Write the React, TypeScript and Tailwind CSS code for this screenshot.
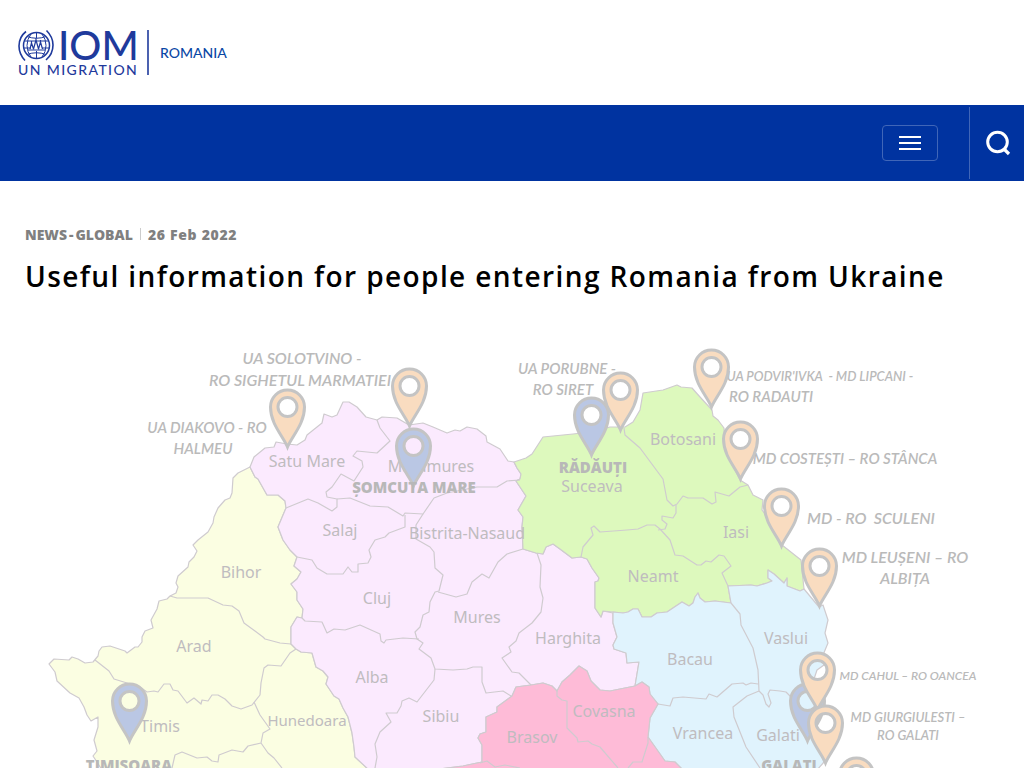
import React from "react";

type Label = { text: string; x: number; y: number };

const outline = "#cfcbcf";

const zones = [
  {
    name: "west",
    fill: "#fbfee2",
    d: "M250 467L238 473L233 478L232 493L230 498L225 500L218 508L214 517L213 523L208 532L198 540L193 545L197 551L194 557L189 562L188 567L178 576L176 583L178 587L176 593L170 596L167 599L159 601L157 609L151 620L153 628L145 631L142 637L142 642L138 647L135 647L127 653L125 651L110 646L102 647L99 651L98 656L93 662L85 663L78 659L72 657L69 660L54 659L49 664L55 672L57 681L70 693L79 698L84 707L87 715L91 721L98 717L98 727L94 740L97 751L93 756L97 762L102 770L369 770L355 757L354 747L352 733L348 717L343 708L339 699L334 696L326 684L328 677L323 671L316 667L312 653L301 652L296 649L291 644L291 627L297 617L302 618L303 609L297 600L297 592L291 584L297 579L301 572L294 566L297 557L290 550L283 540L278 527L286 508L285 501L278 495L267 495L258 479L255 477Z",
  },
  {
    name: "centre",
    fill: "#fbeafe",
    d: "M250 467L254 457L265 448L274 447L276 442L287 444L297 445L305 440L307 435L322 423L324 414L332 417L337 415L343 402L349 402L357 407L366 417L377 420L382 417L397 418L409 425L423 423L433 427L447 433L455 430L460 431L467 427L477 429L486 436L487 442L500 449L508 461L514 462L517 468L521 474L520 479L516 481L526 496L522 503L518 510L523 517L522 527L523 549L536 553L543 554L546 547L553 544L560 549L572 558L581 557L587 559L592 568L599 578L598 581L595 582L595 608L601 617L603 611L613 613L613 623L617 637L613 645L614 649L626 653L627 663L639 662L635 686L610 691L600 690L591 681L587 671L579 666L570 675L562 682L557 691L552 686L543 683L531 685L516 687L512 696L497 707L497 712L486 717L486 732L480 734L478 738L482 745L482 762L463 766L432 770L369 770L355 757L354 747L352 733L348 717L343 708L339 699L334 696L326 684L328 677L323 671L316 667L312 653L301 652L296 649L291 644L291 627L297 617L302 618L303 609L297 600L297 592L291 584L297 579L301 572L294 566L297 557L290 550L283 540L278 527L286 508L285 501L278 495L267 495L258 479L255 477Z",
  },
  {
    name: "north-east",
    fill: "#ddf9bd",
    d: "M514 462L526 458L532 454L543 437L573 434L591 432L610 427L625 427L633 422L640 410L643 393L663 390L677 385L681 387L692 388L700 397L712 410L713 416L718 420L724 428L725 450L740 480L748 485L753 495L763 500L762 510L767 517L782 545L801 560L804 589L800 591L787 586L787 578L784 583L774 574L768 570L768 578L772 581L767 583L757 586L751 585L728 586L731 603L715 601L705 602L700 598L698 593L695 597L693 603L689 606L682 602L667 612L657 613L651 617L642 617L638 609L633 609L628 612L623 613L613 612L603 611L601 617L595 608L595 582L598 581L599 578L592 568L587 559L581 557L572 558L560 549L553 544L546 547L543 554L536 553L523 549L522 527L523 517L518 510L522 503L526 496L516 481L520 479L521 474L517 468Z",
  },
  {
    name: "east",
    fill: "#e0f3fd",
    d: "M613 612L623 613L628 612L633 609L638 609L642 617L651 617L657 613L667 612L682 602L689 606L693 603L695 597L698 593L700 598L705 602L715 601L731 603L728 586L751 585L757 586L767 583L772 581L768 578L768 570L774 574L784 583L787 578L787 586L800 591L804 589L819 607L823 605L828 620L825 633L828 643L823 655L824 665L817 670L814 679L818 713L814 735L824 762L817 770L683 770L675 762L665 761L648 737L650 718L658 704L650 694L649 687L642 682L635 686L639 662L627 663L626 653L614 649L613 645L617 637L613 623Z",
  },
  {
    name: "south",
    fill: "#febbd7",
    d: "M635 686L642 682L649 687L650 694L658 704L650 718L648 737L665 761L675 762L683 770L432 770L463 766L482 762L482 745L478 738L480 734L486 732L486 717L497 712L497 707L512 696L516 687L531 685L543 683L552 686L557 691L562 682L570 675L579 666L587 671L591 681L600 690L610 691Z",
  },
];

const borders = [
  "M624 428L625 435L640 448L663 479L667 500L673 506L677 504L683 496L688 498L703 498L712 504L716 502L715 492L729 496L740 487L748 485",
  "M676 505L676 513L673 518L662 516L662 520L667 524L665 529L658 530",
  "M581 557L583 547L593 535L591 528L594 526L600 532L627 530L638 529L647 525L655 525L660 529L670 540L675 555L683 556L697 565L701 565L706 561L711 562L719 555L724 556L731 566L722 573L728 586",
  "M731 603L740 614L741 625L753 648L758 670L759 691L763 695L766 704L769 707L771 703L768 694L770 690L780 691L786 692L791 697",
  "M658 704L670 706L673 698L683 697L706 699L709 694L717 697L732 684L743 683L746 685L751 683L758 684",
  "M759 691L747 696L733 707L734 717L746 747L760 768",
  "M557 691L557 696L562 700L567 701L567 728L577 738L578 742L588 741L592 744L600 747L618 768",
  "M628 768L633 762L642 762L648 743L648 737M480 763L487 761L495 767L505 765L520 768",
  "M377 420L380 428L390 441L377 453L357 451L353 456L362 461L363 467L354 481L341 474L332 487L326 492L327 497L337 499L337 507L332 511L318 503L308 499L286 508",
  "M337 499L350 498L370 506L388 507L403 516L405 513L423 514L434 498L447 493L477 487L497 487L507 481L520 480",
  "M405 515L405 527L389 533L385 537L375 540L369 550L371 557L368 563L358 564L358 572L352 572L348 567L343 574L327 574L317 568L312 560L297 557",
  "M423 514L416 525L416 539L430 547L434 552L435 568L443 575L439 591L435 592L430 602L429 612L423 615L420 627L415 632L417 639L423 643L419 649L431 658L435 669L453 670L467 669L473 667L482 667L482 682L486 693L503 691L511 696",
  "M438 592L456 597L467 594L472 582L482 574L489 578L498 562L507 554L523 549",
  "M537 553L541 565L540 587L543 598L541 612L532 623L519 633L516 641L509 647L511 652L502 658L512 672L519 673L531 685",
  "M302 618L305 621L322 622L327 633L334 629L345 630L360 625L380 634L381 641L384 643L386 640L403 638L419 639",
  "M435 669L434 680L417 702L409 698L402 701L401 706L397 713L386 713L391 722L380 732L375 744L377 757L375 768",
  "M170 596L177 598L208 598L223 605L232 606L239 611L244 623L263 637L265 639L280 643L291 644",
  "M95 660L109 671L114 679L140 687L147 692L154 691L158 692L164 684L170 684L173 690L178 691L187 703L194 698L201 704L202 700L208 701L212 695L218 695L225 699L232 706L241 709L252 705L260 695L261 683L264 668L268 665L281 666L290 653L296 649",
  "M254 702L260 715L270 729L263 733L261 743L248 746L243 752L232 750L219 755L218 762L212 761L207 757L197 758L182 752L175 755L172 768M261 743L268 753L274 758L282 768",
];

const counties: Label[] = [
  { text: "Satu Mare", x: 307, y: 467 },
  { text: "Maramures", x: 431, y: 472 },
  { text: "Salaj", x: 340, y: 536 },
  { text: "Bistrita-Nasaud", x: 467, y: 539 },
  { text: "Bihor", x: 241, y: 578 },
  { text: "Cluj", x: 377, y: 604 },
  { text: "Mures", x: 477, y: 623 },
  { text: "Arad", x: 194, y: 652 },
  { text: "Harghita", x: 568, y: 644 },
  { text: "Alba", x: 372, y: 683 },
  { text: "Sibiu", x: 441, y: 722 },
  { text: "Timis", x: 160, y: 732 },
  { text: "Botosani", x: 683, y: 445 },
  { text: "Suceava", x: 592, y: 492 },
  { text: "Iasi", x: 736, y: 538 },
  { text: "Neamt", x: 653, y: 582 },
  { text: "Bacau", x: 690, y: 665 },
  { text: "Vaslui", x: 786, y: 644 },
  { text: "Vrancea", x: 703, y: 739 },
  { text: "Galati", x: 778, y: 741 },
  { text: "Covasna", x: 604, y: 717 },
  { text: "Brasov", x: 532, y: 743 },
];

const narrowCounties: Label[] = [{ text: "Hunedoara", x: 307, y: 726 }];

const centres: Label[] = [
  { text: "ȘOMCUTA MARE", x: 414, y: 493 },
  { text: "RĂDĂUȚI", x: 593, y: 473 },
  { text: "TIMIȘOARA", x: 129, y: 771 },
  { text: "GALAȚI", x: 789, y: 771 },
];

const largeCrossings: Label[] = [
  { text: "UA SOLOTVINO -", x: 302, y: 364 },
  { text: "RO SIGHETUL MARMATIEI", x: 300, y: 386 },
  { text: "MD - RO  SCULENI", x: 871, y: 524 },
  { text: "MD LEUȘENI – RO", x: 905, y: 563 },
  { text: "ALBIȚA", x: 905, y: 584 },
];

const crossings: Label[] = [
  { text: "UA DIAKOVO - RO", x: 207, y: 433 },
  { text: "HALMEU", x: 203, y: 454 },
  { text: "UA PORUBNE -", x: 567, y: 374 },
  { text: "RO SIRET", x: 563, y: 395 },
  { text: "RO RADAUTI", x: 771, y: 402 },
  { text: "MD COSTEȘTI – RO STÂNCA", x: 845, y: 464 },
];

const smallCrossings: Label[] = [
  { text: "UA PODVIR'IVKA  - MD LIPCANI -", x: 820, y: 381 },
  { text: "MD GIURGIULESTI –", x: 908, y: 722 },
  { text: "RO GALATI", x: 908, y: 740 },
];

const tinyCrossings: Label[] = [{ text: "MD CAHUL – RO OANCEA", x: 908, y: 680 }];

const pins = [
  { x: 287, y: 407, fill: "#f9dcc0" },
  { x: 409, y: 386, fill: "#f9dcc0" },
  { x: 413, y: 446, fill: "#bac7e4" },
  { x: 591, y: 415, fill: "#bac7e4" },
  { x: 620, y: 390, fill: "#f9dcc0" },
  { x: 711, y: 367, fill: "#f9dcc0" },
  { x: 740, y: 439, fill: "#f9dcc0" },
  { x: 781, y: 506, fill: "#f9dcc0" },
  { x: 819, y: 566, fill: "#f9dcc0" },
  { x: 129, y: 701, fill: "#bac7e4" },
  { x: 807, y: 701, fill: "#bac7e4" },
  { x: 817, y: 670, fill: "#f9dcc0" },
  { x: 825, y: 723, fill: "#f9dcc0" },
  { x: 856, y: 775, fill: "#f9dcc0" },
];

function Labels({ items, className }: { items: Label[]; className: string }) {
  return (
    <g className={className} textAnchor="middle">
      {items.map((l) => (
        <text key={l.text} x={l.x} y={l.y} style={{ whiteSpace: "pre" }}>
          {l.text}
        </text>
      ))}
    </g>
  );
}

function Logo() {
  return (
    <svg viewBox="0 0 212 50" className="h-[50px] w-[212px]" role="img" aria-label="IOM UN Migration Romania">
      <g fill="none" stroke="#1f3a9c">
        <circle cx="18.500" cy="17.500" r="13" strokeWidth="1.5" />
        <path d="M6 13H31M5.500 20H13M24 20H31.500M9 8.500Q18.500 12 28 8.500M9 26.500Q18.500 23 28 26.500" strokeWidth="1" />
        <path d="M18.500 4.500V10M18.500 23V30.500M13 6Q9 11 9 17.500T13 29M24 6Q28 11 28 17.500T24 29" strokeWidth="1" />
        <path d="M12 21L13.500 15L15.500 21M15.500 21L18 12L20.500 21M20.500 21L22.500 14L24.500 21M13.500 13V15M18 10V12M22.500 12V14M10 22H27" strokeWidth="1.2" />
        <path d="M8 3.500Q1 9 1 18Q1 26 7 32.500" strokeWidth="1.6" />
        <path d="M28.500 2.500Q35 9 35 17Q35 26 28 32" strokeWidth="1.6" />
      </g>
      <g fill="#1f3a9c" className="font-['Lato',sans-serif]">
        <text x="40" y="32" className="text-[40px] font-medium">
          IOM
        </text>
        <text x="0" y="47" className="text-[14px] font-medium tracking-widest">
          UN MIGRATION
        </text>
        <text x="142" y="30" fill="#0a47a5" className="text-[14px] font-medium">
          ROMANIA
        </text>
      </g>
      <path d="M130 2V47" stroke="#1f3a9c" strokeWidth="1.6" />
    </svg>
  );
}

function BorderMap() {
  return (
    <svg viewBox="0 328 1024 440" className="block w-full" role="img" aria-label="Map of border crossings into Romania">
      <g stroke={outline} strokeWidth="1.200" strokeLinejoin="round">
        {zones.map((z) => (
          <path key={z.name} d={z.d} fill={z.fill} />
        ))}
        {borders.map((d) => (
          <path key={d} d={d} fill="none" />
        ))}
      </g>
      <Labels items={counties} className="fill-[#bfbcbf] font-['Noto_Sans',sans-serif] text-[16px]" />
      <Labels items={narrowCounties} className="fill-[#bfbcbf] font-['Noto_Sans',sans-serif] text-[15px]" />
      <Labels items={largeCrossings} className="fill-[#bababa] font-['Lato',sans-serif] text-[16px] font-semibold italic" />
      <Labels items={crossings} className="fill-[#bababa] font-['Lato',sans-serif] text-[15px] font-semibold italic" />
      <Labels items={smallCrossings} className="fill-[#bababa] font-['Lato',sans-serif] text-[13px] font-semibold italic" />
      <Labels items={tinyCrossings} className="fill-[#bababa] font-['Lato',sans-serif] text-[12px] font-semibold italic" />
      {pins.map((p) => (
        <g key={`${p.x}-${p.y}`} transform={`translate(${p.x} ${p.y})`} stroke="#c4c4c4" strokeWidth="3">
          <path
            d="M0.500 40C-4 29 -16.500 17 -16.500 0A17 17 0 0 1 17.500 0C17.500 17 5 29 0.500 40ZM10 0A9.500 9.500 0 1 0 -9 0A9.500 9.500 0 1 0 10 0Z"
            fill={p.fill}
            fillRule="evenodd"
          />
        </g>
      ))}
      <Labels items={centres} className="fill-[#b8b8b8] font-['Open_Sans',sans-serif] text-[15px] font-extrabold" />
    </svg>
  );
}

export default function App() {
  return (
    <div className="bg-white font-['Open_Sans',sans-serif] text-black">
      <header>
        <div className="flex h-[105px] items-center px-[18px]">
          <a href="#home">
            <Logo />
          </a>
        </div>
        <nav className="flex h-[76px] items-center justify-end bg-[#0033a0] py-[2px]">
          <button
            type="button"
            aria-label="Open menu"
            className="mr-[31px] flex h-9 w-14 items-center justify-center rounded border border-[#4066b8]"
          >
            <svg viewBox="0 0 22 14" className="h-[14px] w-[22px]" stroke="#fff" strokeWidth="2">
              <path d="M0 1H22M0 7H22M0 13H22" />
            </svg>
          </button>
          <div className="flex h-full w-[55px] items-center justify-center border-l border-[#4066b8]">
            <button type="button" aria-label="Search" className="ml-0.5">
              <svg viewBox="0 0 26 26" className="block size-[26px]" fill="none" stroke="#fff">
                <circle cx="12.500" cy="12" r="9.800" strokeWidth="3" />
                <path d="M18.500 18.500L24 24" strokeWidth="3.200" />
              </svg>
            </button>
          </div>
        </nav>
      </header>
      <main>
        <div className="px-[25px] pt-[43px] pb-[30px]">
          <div className="flex h-5 items-center text-[14px] font-extrabold text-[#808080]">
            <span className="flex gap-[2px]">
              <span>NEWS</span>
              <span>-</span>
              <span>GLOBAL</span>
            </span>
            <span className="mx-[7px] h-3 w-px bg-[#cccccc]" />
            <time dateTime="2022-02-26" className="tracking-wider">
              26 Feb 2022
            </time>
          </div>
          <h1 className="mt-[11px] text-[28px] leading-[43px] font-semibold tracking-wider">
            Useful information for people entering Romania from Ukraine
          </h1>
        </div>
        <BorderMap />
      </main>
    </div>
  );
}
